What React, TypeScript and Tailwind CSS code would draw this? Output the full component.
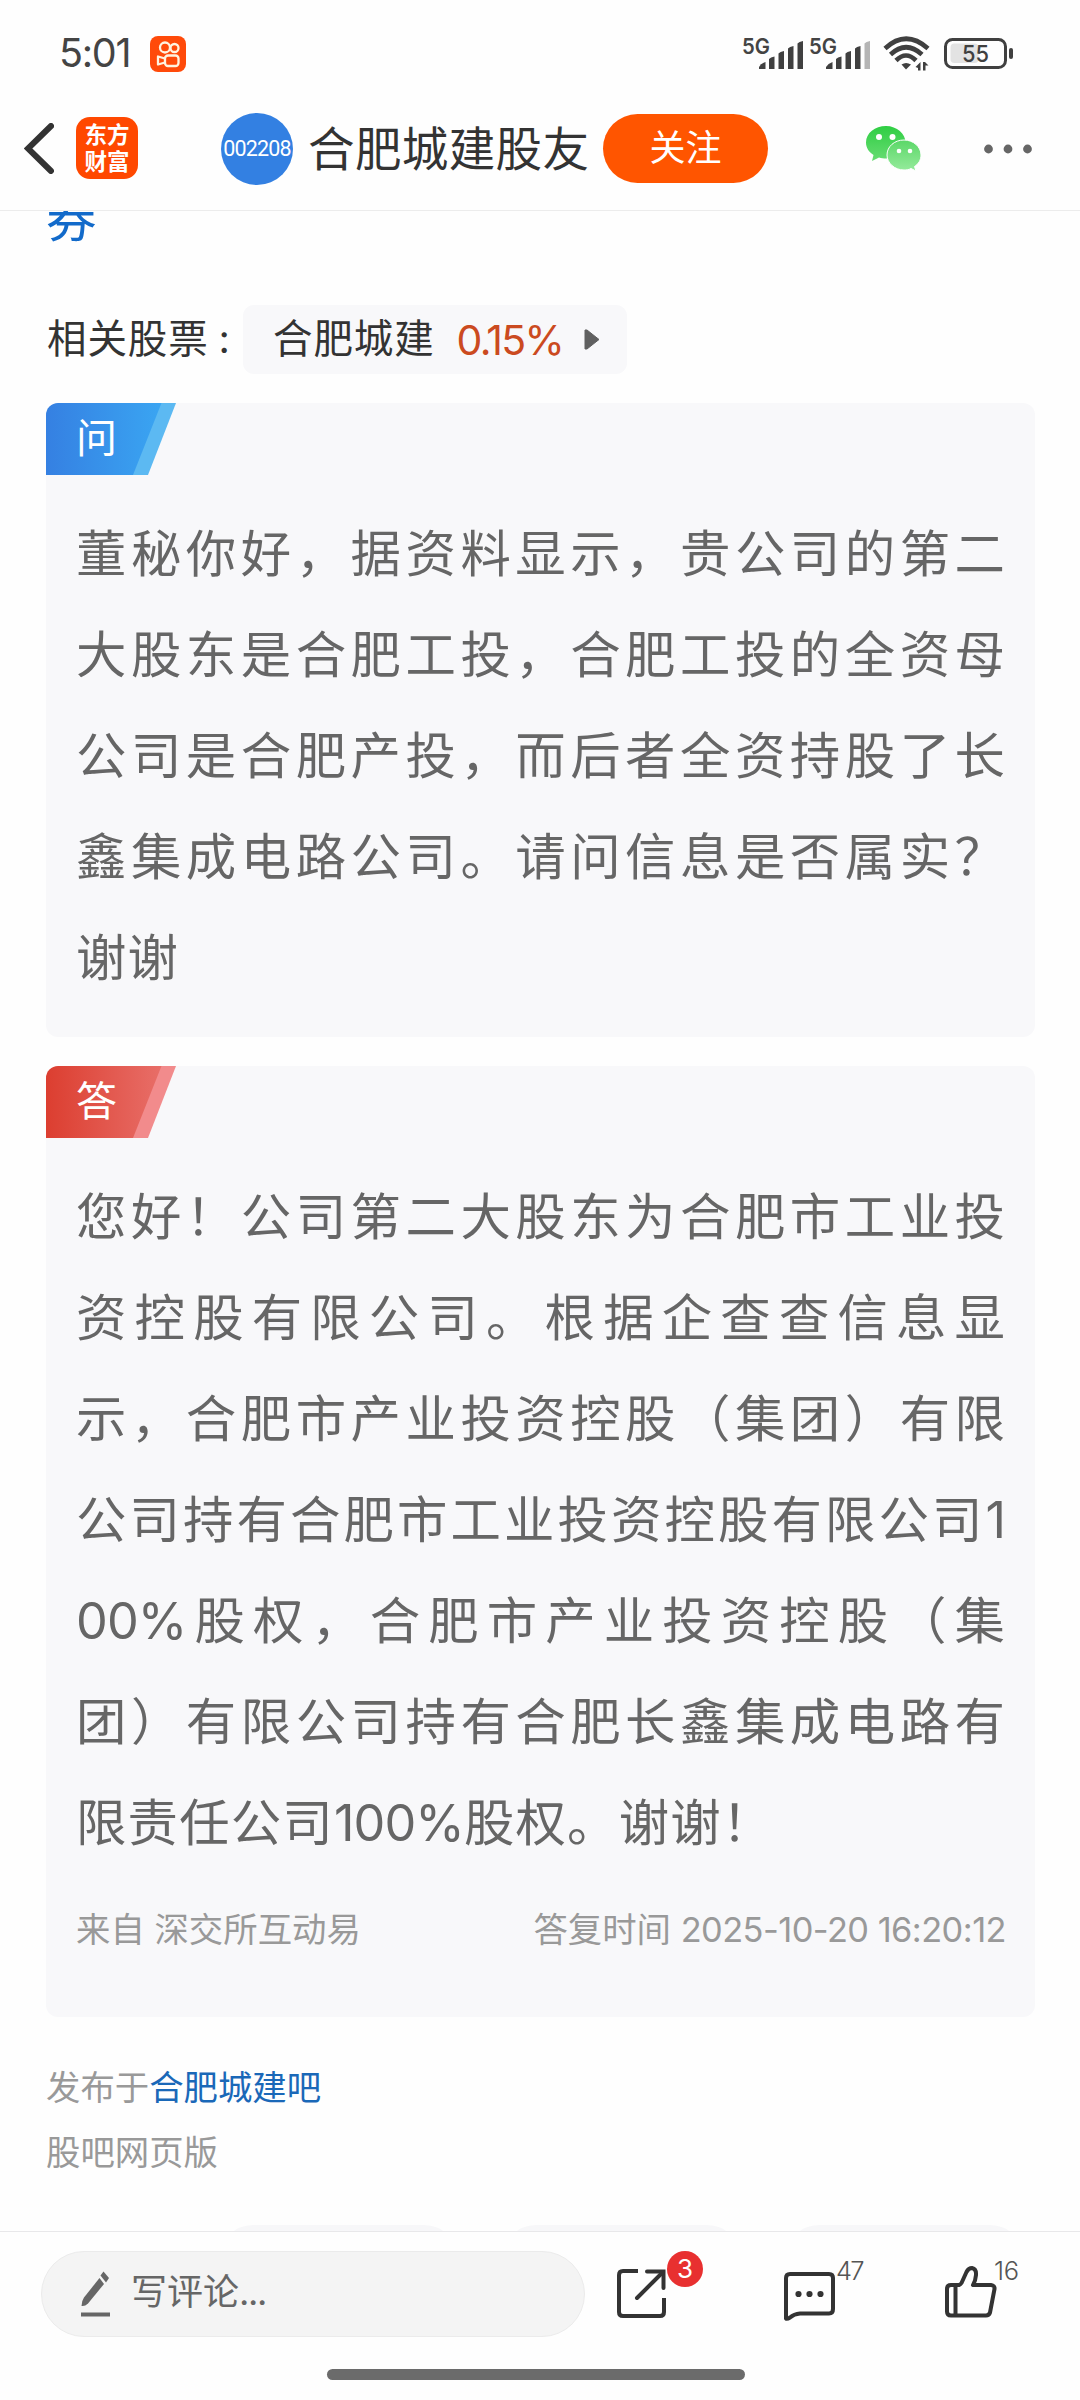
import React from 'react';

const question = [
  '董秘你好，据资料显示，贵公司的第二',
  '大股东是合肥工投，合肥工投的全资母',
  '公司是合肥产投，而后者全资持股了长',
  '鑫集成电路公司。请问信息是否属实？',
  '谢谢',
];

const answer = [
  '您好！公司第二大股东为合肥市工业投',
  '资控股有限公司。根据企查查信息显',
  '示，合肥市产业投资控股（集团）有限',
  '公司持有合肥市工业投资控股有限公司1',
  '00%股权，合肥市产业投资控股（集',
  '团）有限公司持有合肥长鑫集成电路有',
  '限责任公司100%股权。谢谢！',
];

function Lines({ lines }: { lines: string[] }) {
  return (
    <div className="mt-[28px] pl-[30px] pr-[30px] text-[50.4px] leading-[101px] text-[#666]">
      {lines.map((line, i) => (
        <p
          key={i}
          className={
            i === lines.length - 1
              ? 'whitespace-nowrap tracking-[1.2px]'
              : 'whitespace-nowrap [text-align:justify] [text-align-last:justify]'
          }
        >
          {line.split(/([0-9]+%?)/).map((part, j) =>
            j % 2 === 1 ? (
              <span key={j} className="tracking-[-0.9px]">
                {part}
              </span>
            ) : (
              part
            ),
          )}
        </p>
      ))}
    </div>
  );
}

function Tag({ label, from, to, edge }: { label: string; from: string; to: string; edge: string }) {
  return (
    <div className="relative h-[72px] w-[130px]">
      <svg className="absolute inset-0" width="130" height="72" viewBox="0 0 130 72">
        <defs>
          <linearGradient id={'tag' + label} x1="0" y1="0" x2="1" y2="0">
            <stop offset="0" stopColor={from} />
            <stop offset="1" stopColor={to} />
          </linearGradient>
        </defs>
        <path d="M100 0H130L102 72H80Z" fill={edge} />
        <path d="M0 0H115.500L87 72H0Z" fill={'url(#tag' + label + ')'} />
      </svg>
      <span className="relative block pl-[30px] text-[41px] leading-[70px] text-white">{label}</span>
    </div>
  );
}

function Signal({ weak }: { weak?: boolean }) {
  return (
    <svg width="62" height="34" viewBox="0 0 62 34" className="block overflow-visible">
      <text x="0" y="17.500" fontFamily="Inter" fontSize="22" fontWeight="600" fill="#444" textLength="28" lengthAdjust="spacingAndGlyphs">
        5G
      </text>
      <g fill="#404040">
        <path d="M17 33V31Q19 27.500 23.500 26V33Z" />
        <path d="M27 33V23Q28.500 21 32.500 20.500V33Z" />
        <path d="M36.500 33V17.500Q38 15.500 42 15V33Z" />
        <path d="M46 33V12.500Q47.500 10.500 51.500 10V33Z" />
        <path d="M55.500 33V7.500Q57 5.500 61 5V33Z" fill={weak ? '#b5b5b5' : '#404040'} />
      </g>
    </svg>
  );
}

function StatusBar() {
  return (
    <div className="flex h-[106px] shrink-0 items-center pl-[59px] pr-[66px]">
      <span className="w-[73px] whitespace-nowrap pt-[2px] text-[39.5px] tracking-[-1.3px] text-[#444]">5:01</span>
      <svg className="ml-[18px] mt-[1px]" width="36" height="36" viewBox="0 0 36 36">
        <rect width="36" height="36" rx="8" fill="#ff4a0a" />
        <g fill="none" stroke="#fff3e0" strokeWidth="2.300">
          <circle cx="15" cy="11.500" r="5" />
          <circle cx="24.500" cy="12" r="4" />
          <rect x="15" y="19.500" width="13.500" height="10.500" rx="3" />
          <path d="M15 22.500L8 20.500V28.500L15 26.500" strokeLinejoin="round" />
        </g>
      </svg>
      <div className="ml-auto flex items-center">
        <Signal />
        <div className="ml-[5px]">
          <Signal weak />
        </div>
        <svg className="ml-[12px]" width="48" height="36" viewBox="0 0 48 36">
          <g fill="none" stroke="#404040" strokeWidth="4.600">
            <path d="M2 13.500Q23 -6 45 13.500" />
            <path d="M7.500 19.500Q23 5 39 19.500" />
            <path d="M13 25.500Q23 15.500 33 25.500" />
          </g>
          <path d="M18.500 29.500Q23 26.500 28 29.500L23 34.500Z" fill="#404040" />
          <path d="M37.500 27V35.500H35V33L32.500 32ZM40 35.500V27H42L45.500 30.500H42.500V35.500Z" fill="#404040" />
        </svg>
        <svg className="ml-[13px]" width="70" height="31" viewBox="0 0 70 31">
          <rect x="1.500" y="1.500" width="60" height="28" rx="7" fill="none" stroke="#404040" strokeWidth="3" />
          <rect x="6.500" y="5.500" width="28" height="19.500" rx="4" fill="#e3e3e3" />
          <rect x="65" y="10" width="4" height="11" rx="2" fill="#404040" />
          <text x="18" y="24" fontFamily="Inter" fontSize="23.500" fontWeight="500" fill="#404040" textLength="27" lengthAdjust="spacingAndGlyphs">
            55
          </text>
        </svg>
      </div>
    </div>
  );
}

function NavBar() {
  return (
    <div className="flex h-[105px] shrink-0 items-start border-b border-[#ececec] pl-[24px] pt-[7px]">
      <svg className="mt-[10px]" width="30" height="51" viewBox="0 0 30 51">
        <path d="M27 3L4 25.500L27 48" fill="none" stroke="#333" strokeWidth="6" strokeLinecap="round" strokeLinejoin="miter" />
      </svg>
      <div className="ml-[22px] mt-[4px] flex h-[62px] w-[62px] flex-col items-center justify-center rounded-[14px] bg-[#ff4800] text-[22.5px] font-bold leading-[27px] text-white">
        <span>东方</span>
        <span>财富</span>
      </div>
      <div className="ml-[83px] flex h-[72px] w-[72px] items-center justify-center rounded-full bg-[#3380e2] font-[Roboto] text-[21.5px] tracking-[-0.8px] text-white">
        <span>002208</span>
      </div>
      <h1 className="ml-[15px] w-[295px] whitespace-nowrap text-[46.5px] leading-[73px] tracking-[0.4px] text-[#333]">合肥城建股友</h1>
      <button className="mt-[1px] h-[69px] w-[165px] rounded-full bg-[#ff5500] text-[36px] leading-[69px] text-white">关注</button>
      <svg className="ml-[98px] mt-[12px]" width="56" height="47" viewBox="0 0 56 47">
        <defs>
          <linearGradient id="wx1" x1="0" y1="0" x2="0" y2="1">
            <stop offset="0" stopColor="#2fce43" />
            <stop offset="1" stopColor="#68dc73" />
          </linearGradient>
          <linearGradient id="wx2" x1="0" y1="0" x2="0" y2="1">
            <stop offset="0" stopColor="#5bd768" />
            <stop offset="1" stopColor="#96eb9c" />
          </linearGradient>
        </defs>
        <path d="M20 1C9 1 0 8 0 17.500C0 23 3 27 7.500 30L6 36L13 32.500C15 33.200 18 33.500 20 33.500C31 33.500 39.500 26 39.500 17.500S31 1 20 1Z" fill="url(#wx1)" />
        <path d="M38 15C28.500 15 21 21.500 21 30C21 38 28.500 45 38 45C40.500 45 43 44.700 45 43.500L50 46L48.500 41.500C52.500 39 55 35 55 30C55 21.500 47 15 38 15Z" fill="url(#wx2)" stroke="#fff" strokeWidth="1" />
        <g fill="#fff">
          <circle cx="13" cy="12" r="3" />
          <circle cx="26.500" cy="12" r="3" />
          <circle cx="33" cy="26" r="2.300" />
          <circle cx="44" cy="26" r="2.300" />
        </g>
      </svg>
      <svg className="ml-[61px] mt-[31px]" width="50" height="10" viewBox="0 0 50 10" fill="#666">
        <circle cx="5.500" cy="5" r="4.400" />
        <circle cx="25" cy="5" r="4.400" />
        <circle cx="44.500" cy="5" r="4.400" />
      </svg>
    </div>
  );
}

function BottomBar() {
  return (
    <footer className="h-[169px] shrink-0 border-t border-[#e8e8ea] bg-[#fefefe]">
      <div className="flex h-[137px] items-start pl-[41px] pt-[19px]">
        <div className="flex h-[86px] w-[544px] items-center rounded-full border border-[#ebebeb] bg-[#f4f4f4] pl-[39px]">
          <svg width="30" height="46" viewBox="0 0 30 46" fill="#666">
            <path d="M18.500 7L23 13L7 32.500Q4 35.500 0.500 35Q0.500 30 3 26.500Z" />
            <path d="M22.500 0.500L28 7L25 11.500L19.500 4.500Z" />
            <rect x="0" y="41.500" width="29" height="4" />
          </svg>
          <span className="ml-[20px] pb-[5px] text-[36px] text-[#666]">
            写评论<span className="tracking-[-1.4px]">...</span>
          </span>
        </div>
        <div className="relative ml-[32px] mt-[18px] h-[49px] w-[49px]">
          <svg width="49" height="49" viewBox="0 0 49 49" fill="none" stroke="#333" strokeWidth="4">
            <path d="M21 2H6Q2 2 2 6V43Q2 47 6 47H43Q47 47 47 43V29" />
            <path d="M30 2.500H46.500V19" strokeLinecap="round" />
            <path d="M46 3L20 29" strokeLinecap="round" />
          </svg>
          <span className="absolute -top-[18px] left-[50px] flex h-[36px] w-[36px] items-center justify-center rounded-full bg-[#e83030] pb-px text-[26px] text-white">3</span>
        </div>
        <div className="relative ml-[118px] mt-[21px] h-[49px] w-[52px]">
          <svg width="52" height="49" viewBox="0 0 52 49">
            <path d="M2 46.500V6Q2 2 6 2H45Q49 2 49 6V37Q49 41.500 45 41.500H16Q10 42 6 45.500Q3 47.500 2 46.500Z" fill="none" stroke="#333" strokeWidth="4" strokeLinejoin="round" />
            <g fill="#333">
              <circle cx="14.500" cy="22" r="3.100" />
              <circle cx="25.500" cy="22" r="3.100" />
              <circle cx="36.500" cy="22" r="3.100" />
            </g>
          </svg>
          <span className="absolute -top-[16px] left-[52px] text-[25.5px] font-light leading-[30px] tracking-[-1.8px] text-[#555]">47</span>
        </div>
        <div className="relative ml-[109px] mt-[15px] h-[52px] w-[52px]">
          <svg width="52" height="52" viewBox="0 0 52 52" fill="none" stroke="#333" strokeWidth="4" strokeLinejoin="round">
            <path d="M6 19H14Q15.500 18.500 16.500 17L21.500 6Q23.500 2 27 2Q31.500 3 31 9Q30.500 15 28 19H46Q50 19.500 49.500 23L45 46.500Q44 49.500 41 49.500H6Q2 49.500 2 45.500V23Q2 19 6 19Z" />
            <path d="M10.500 20V49" />
          </svg>
          <span className="absolute -top-[10px] left-[49px] text-[25.5px] font-light leading-[30px] tracking-[-0.4px] text-[#555]">16</span>
        </div>
      </div>
      <div className="mx-auto h-[11px] w-[418px] translate-x-[-4px] rounded-full bg-[#6b6b6b]" />
    </footer>
  );
}

export default function App() {
  return (
    <div
      lang="zh-CN"
      className="flex h-[2400px] w-[1080px] flex-col overflow-hidden bg-[#fefefe] font-['Inter','Noto_Sans_CJK_SC',sans-serif]"
    >
      <StatusBar />
      <NavBar />
      <main className="h-[2020px] shrink-0 overflow-hidden pl-[46px] pr-[45px]">
        <div className="h-[94px] overflow-hidden">
          <p className="-mt-[30px] text-[50.4px] leading-[76px] text-[#126aca]">券</p>
        </div>
        <div className="flex h-[69px] items-center text-[39.5px] tracking-[0.9px] text-[#333]">
          <span className="w-[197px] whitespace-nowrap pl-[1px] leading-[69px]">
            相关股票<span className="ml-[10px]">:</span>
          </span>
          <div className="flex h-[69px] w-[384px] items-center rounded-[11px] bg-[#f8f8fa] pl-[30px]">
            <span className="whitespace-nowrap leading-[69px]">合肥城建</span>
            <span className="ml-[22px] w-[106px] whitespace-nowrap text-[41px] leading-[70px] tracking-[-1.7px] text-[#cb4a20]">0.15%</span>
            <svg className="ml-[21px]" width="16" height="21" viewBox="0 0 16 21">
              <path d="M1 1H3L15 10.500L3 20H1Z" fill="#606060" stroke="#606060" strokeLinejoin="round" />
            </svg>
          </div>
        </div>
        <section className="mt-[29px] h-[634px] overflow-hidden rounded-[12px] bg-[#f8f8fa]">
          <Tag label="问" from="#3580e2" to="#3aa5f2" edge="#5cb9f2" />
          <Lines lines={question} />
        </section>
        <section className="mt-[29px] h-[951px] overflow-hidden rounded-[12px] bg-[#f8f8fa]">
          <Tag label="答" from="#dc3e30" to="#e86e68" edge="#f28b8c" />
          <Lines lines={answer} />
          <div className="mt-[37px] flex justify-between whitespace-nowrap pl-[30px] pr-[29px] text-[34.4px] leading-[40px] text-[#999]">
            <span>来自 深交所互动易</span>
            <span>
              答复时间 <span className="tracking-[-0.55px]">2025-10-20 16:20:12</span>
            </span>
          </div>
        </section>
        <div className="mt-[39px] text-[34.4px] leading-[64.5px] text-[#999]">
          <p>
            发布于<a className="text-[#1a68b8]">合肥城建吧</a>
          </p>
          <p>股吧网页版</p>
        </div>
        <div className="mt-[40px] flex gap-[44px] pl-[173px]">
          <div className="h-[68px] w-[239px] shrink-0 rounded-full bg-[#f7f7f9]" />
          <div className="h-[68px] w-[239px] shrink-0 rounded-full bg-[#f7f7f9]" />
          <div className="h-[68px] w-[239px] shrink-0 rounded-full bg-[#f7f7f9]" />
        </div>
      </main>
      <BottomBar />
    </div>
  );
}
